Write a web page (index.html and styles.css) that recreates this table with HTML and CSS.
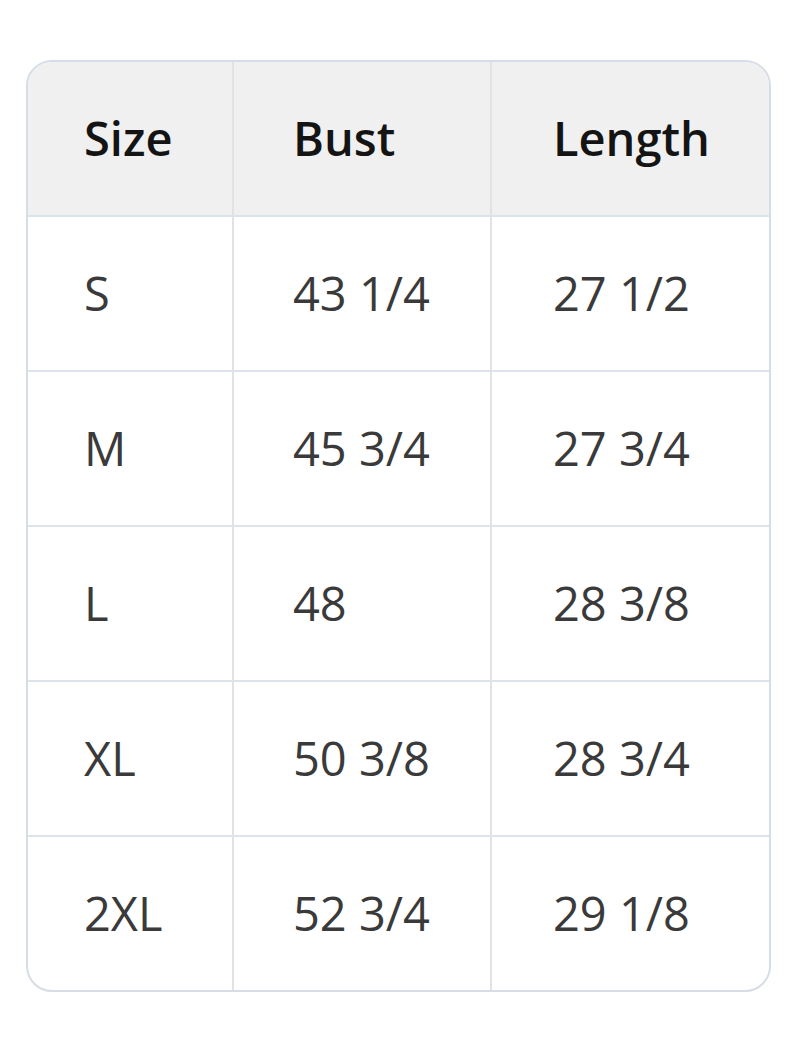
FILE: index.html
```html
<!DOCTYPE html>
<html lang="en">
<head>
<meta charset="utf-8">
<title>Size Chart</title>
<link rel="stylesheet" href="styles.css">
</head>
<body>
<div class="chart">
  <table class="size-table">
    <colgroup>
      <col class="c1">
      <col class="c2">
      <col class="c3">
    </colgroup>
    <thead>
      <tr><th class="p1">Size</th><th class="p2">Bust</th><th class="p3">Length</th></tr>
    </thead>
    <tbody>
      <tr><td class="p1">S</td><td class="p2">43 1/4</td><td class="p3">27 1/2</td></tr>
      <tr><td class="p1">M</td><td class="p2">45 3/4</td><td class="p3">27 3/4</td></tr>
      <tr><td class="p1">L</td><td class="p2">48</td><td class="p3">28 3/8</td></tr>
      <tr><td class="p1">XL</td><td class="p2">50 3/8</td><td class="p3">28 3/4</td></tr>
      <tr><td class="p1">2XL</td><td class="p2">52 3/4</td><td class="p3">29 1/8</td></tr>
    </tbody>
  </table>
</div>
</body>
</html>
```

FILE: styles.css
```css
html, body {
  margin: 0;
  background: #ffffff;
}
body {
  padding: 60px 30px 0 26px;
  font-family: "Open Sans", "Noto Sans", "DejaVu Sans", sans-serif;
}
.chart {
  width: 745px;
  border: 2px solid #d6dde6;
  border-radius: 26px;
  overflow: hidden;
  box-sizing: border-box;
}
.size-table {
  width: 100%;
  border-collapse: separate;
  border-spacing: 0;
  table-layout: fixed;
}
.c1 { width: 206px; }
.c2 { width: 258px; }
.c3 { width: auto; }
.size-table th,
.size-table td {
  height: 153px;
  padding: 0;
  text-align: left;
  vertical-align: middle;
  font-size: 47px;
  line-height: 1;
  box-sizing: border-box;
  border-right: 2px solid #e1e2e4;
  border-bottom: 2px solid #dde3ea;
}
.size-table th:last-child,
.size-table td:last-child {
  border-right: none;
}
.size-table th {
  background: #f0f0f0;
  color: #141414;
  font-weight: 600;
  height: 155px;
}
.size-table td {
  color: #3a3a3a;
  font-weight: 400;
  height: 155px;
}
.size-table tbody tr:last-child td {
  border-bottom: none;
  height: 153px;
}
.p1 { padding-left: 56px !important; }
.p2 { padding-left: 59px !important; }
.p3 { padding-left: 61px !important; }
```
